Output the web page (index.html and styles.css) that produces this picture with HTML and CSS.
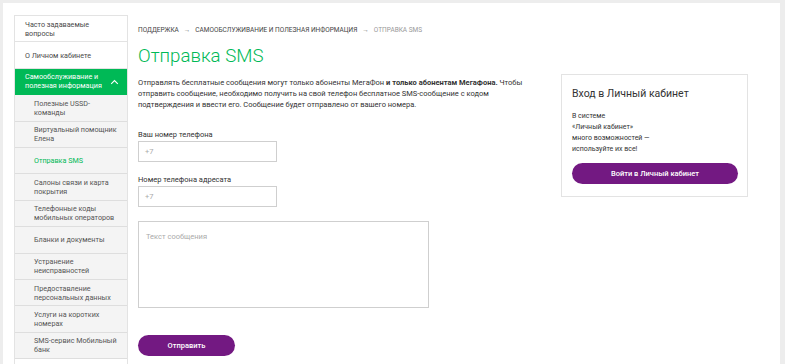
FILE: index.html
```html
<!DOCTYPE html>
<html lang="ru">
<head>
<meta charset="utf-8">
<link rel="stylesheet" href="styles.css">
</head>
<body>
<div class="page">
  <nav class="sidebar">
    <a class="item">Часто задаваемые<br>вопросы</a>
    <a class="item">О Личном кабинете</a>
    <a class="item item-open">Самообслуживание и<br>полезная информация
      <svg class="chev" width="9" height="6" viewBox="0 0 9 6"><path d="M1.2 4.8 L4.5 1.5 L7.8 4.8" fill="none" stroke="#fff" stroke-width="1.1"/></svg>
    </a>
    <div class="sub">
      <a class="sitem">Полезные USSD-<br>команды</a>
      <a class="sitem">Виртуальный помощник<br>Елена</a>
      <a class="sitem sitem-active">Отправка SMS</a>
      <a class="sitem">Салоны связи и карта<br>покрытия</a>
      <a class="sitem">Телефонные коды<br>мобильных операторов</a>
      <a class="sitem">Бланки и документы</a>
      <a class="sitem">Устранение<br>неисправностей</a>
      <a class="sitem">Предоставление<br>персональных данных</a>
      <a class="sitem">Услуги на коротких<br>номерах</a>
      <a class="sitem">SMS-сервис Мобильный<br>банк</a>
    </div>
    <a class="item"></a>
  </nav>
  <main class="content">
    <div class="crumbs">
      <span>Поддержка</span><span class="arr">→</span><span>Самообслуживание и полезная информация</span><span class="arr">→</span><span class="cur">Отправка SMS</span>
    </div>
    <h1 class="title">Отправка SMS</h1>
    <p class="lead">Отправлять бесплатные сообщения могут только абоненты МегаФон <b>и только абонентам МегаФона.</b> Чтобы отправить сообщение, необходимо получить на свой телефон бесплатное SMS-сообщение с кодом подтверждения и ввести его. Сообщение будет отправлено от вашего номера.</p>
    <form class="form">
      <label class="field">
        <span class="label">Ваш номер телефона</span>
        <span class="input">+7</span>
      </label>
      <label class="field">
        <span class="label">Номер телефона адресата</span>
        <span class="input">+7</span>
      </label>
      <div class="textarea">Текст сообщения</div>
      <button type="button" class="btn btn-send">Отправить</button>
    </form>
  </main>
  <aside class="card">
    <h2 class="card-title">Вход в Личный кабинет</h2>
    <p class="card-text">В системе<br>«Личный кабинет»<br>много возможностей —<br>используйте их все!</p>
    <button type="button" class="btn btn-login">Войти в Личный кабинет</button>
  </aside>
</div>
</body>
</html>
```
FILE: styles.css
```css
html, body { margin: 0; padding: 0; }
body {
  background: #ededed;
  font-family: Roboto, "Noto Sans", Arial, sans-serif;
  color: #333;
  width: 785px;
  height: 364px;
  overflow: hidden;
}
.page {
  margin: 3px 5px 0 3px;
  height: 361px;
  overflow: hidden;
  background: #fff;
  display: flex;
  align-items: flex-start;
  padding: 12px 0 0 11px;
  box-sizing: border-box;
}
.sidebar {
  width: 114px;
  flex: none;
  border: 1px solid #e3e3e3;
  border-bottom: none;
  box-sizing: border-box;
  display: flex;
  flex-direction: column;
}
.item, .sitem {
  height: 26.4px;
  box-sizing: border-box;
  display: flex;
  align-items: center;
  font-size: 7.2px;
  line-height: 9px;
  color: #4a4a4a;
  border-bottom: 1px solid #e3e3e3;
  text-decoration: none;
}
.item { padding-left: 10px; background: #fff; }
.item-open {
  background: #00b956;
  color: #fff;
  position: relative;
  border-bottom-color: #00b956;
}
.chev { position: absolute; right: 8px; top: 10px; }
.sub { background: #f4f4f4; display: flex; flex-direction: column; }
.sitem { padding-left: 19px; color: #555; border-bottom-color: #dedede; }
.sitem-active { color: #00b956; }
.content {
  width: 405px;
  flex: none;
  margin-left: 10px;
  padding-top: 11px;
}
.crumbs {
  font-size: 6.5px;
  text-transform: uppercase;
  color: #444;
  line-height: 8px;
}
.crumbs .arr { margin: 0 5px; color: #777; }
.crumbs .cur { color: #999; }
.title {
  margin: 11px 0 0;
  font-size: 18.7px;
  font-weight: 300;
  color: #00b956;
  line-height: 22px;
}
.lead {
  margin: 10px 0 0;
  font-size: 7.5px;
  line-height: 11px;
  color: #333;
}
.lead b { font-weight: 700; }
.form { margin-top: 20px; display: flex; flex-direction: column; align-items: flex-start; }
.field { display: flex; flex-direction: column; margin-bottom: 13px; }
.label { font-size: 7.5px; line-height: 9px; color: #333; margin-bottom: 2px; }
.input {
  width: 139px;
  height: 21px;
  box-sizing: border-box;
  border: 1px solid #cfcfcf;
  font-size: 7.5px;
  color: #aaa;
  display: flex;
  align-items: center;
  padding-left: 6px;
}
.textarea {
  margin-top: 1px;
  width: 291px;
  height: 87px;
  box-sizing: border-box;
  border: 1px solid #cfcfcf;
  font-size: 7.5px;
  color: #aaa;
  padding: 10px 0 0 7px;
}
.btn {
  border: none;
  border-radius: 11px;
  background: #731982;
  color: #fff;
  font-family: inherit;
  font-size: 7.5px;
  font-weight: 500;
  height: 21px;
  cursor: pointer;
}
.btn-send { width: 97px; margin-top: 27px; }
.card {
  margin-left: 18px;
  margin-top: 59px;
  width: 187px;
  box-sizing: border-box;
  border: 1px solid #e3e3e3;
  padding: 12px 10px 12px 10px;
}
.card-title {
  margin: 0;
  font-size: 10.5px;
  font-weight: 400;
  line-height: 14px;
  color: #333;
}
.card-text {
  margin: 10px 0 0;
  font-size: 7px;
  line-height: 11px;
  color: #333;
}
.btn-login { width: 166px; margin-top: 8px; display: block; }
```
